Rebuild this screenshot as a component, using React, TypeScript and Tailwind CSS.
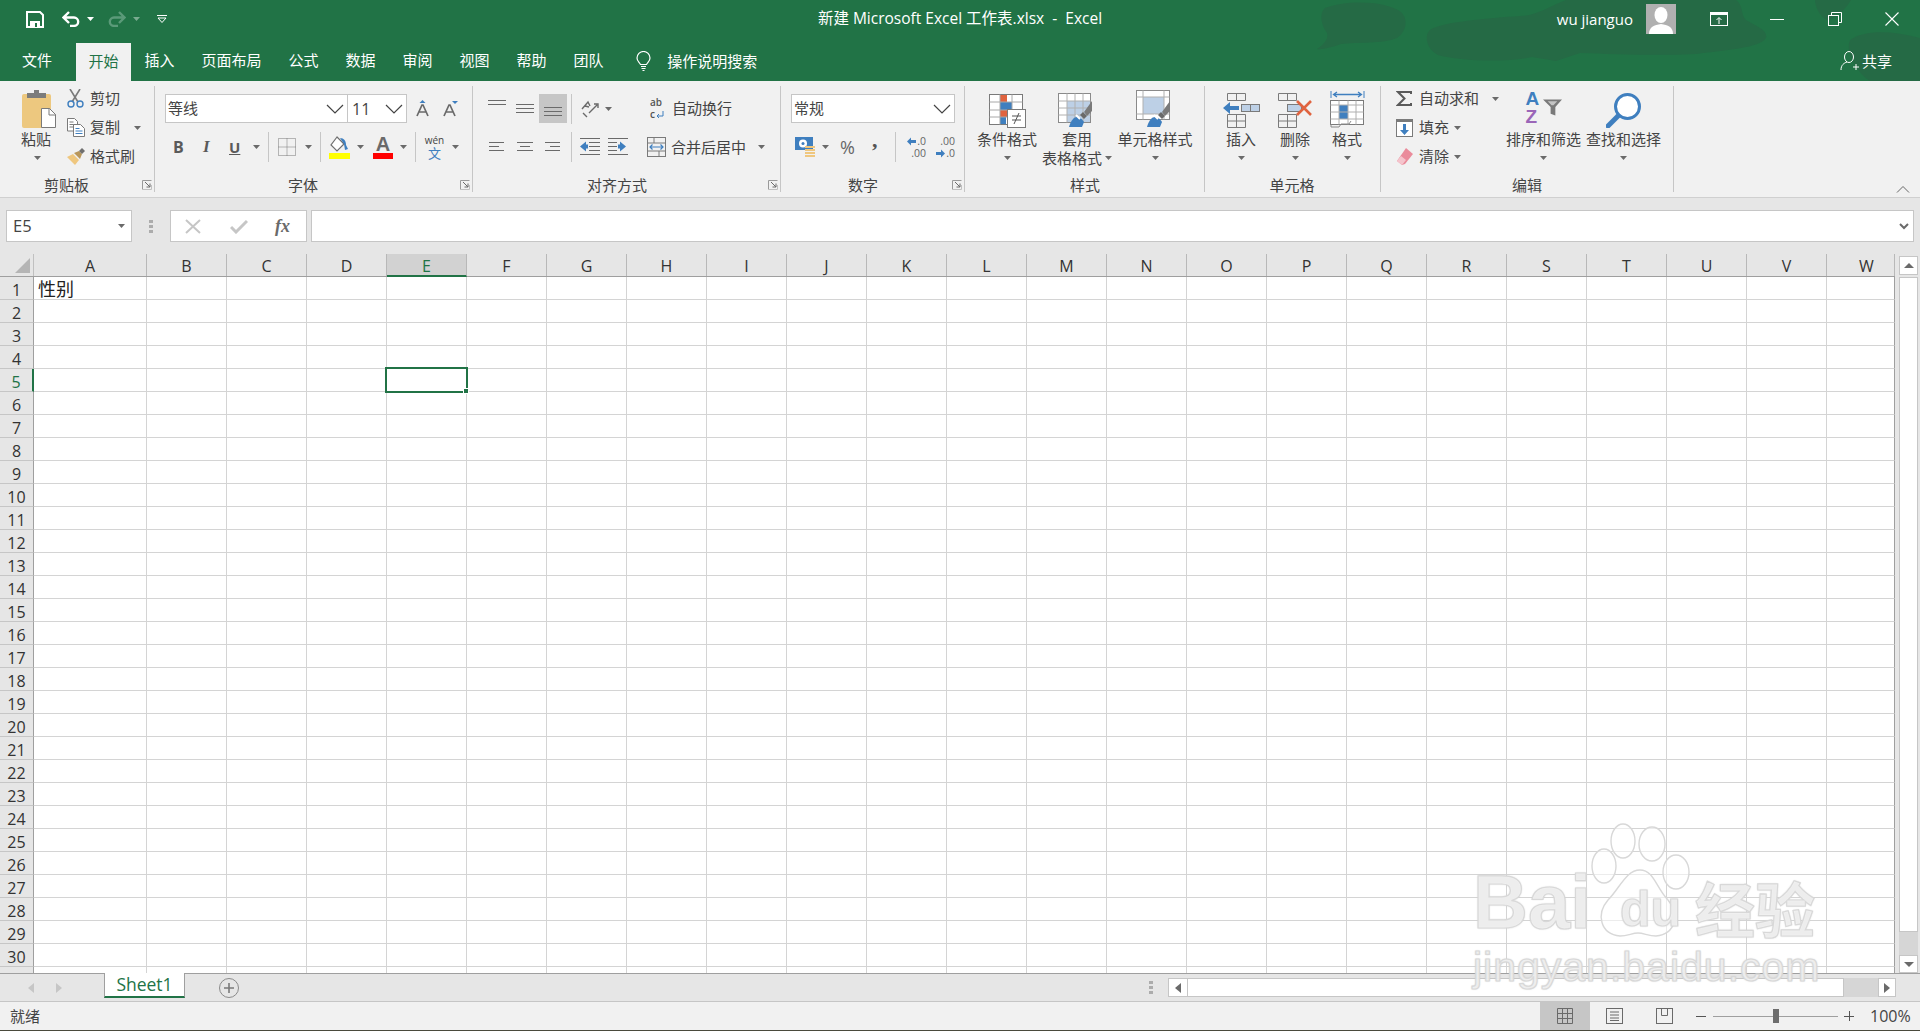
import React from "react";

const COLS = ["A","B","C","D","E","F","G","H","I","J","K","L","M","N","O","P","Q","R","S","T","U","V","W"];
const ROWS = Array.from({ length: 31 }, (_, i) => i + 1);

function colW(c: string) {
  if (c === "A") return "w-[113px]";
  if (c === "W") return "w-[68px]";
  return "w-[80px]";
}

const Caret = ({ className = "" }: { className?: string }) => (
  <svg width="7" height="4" viewBox="0 0 7 4" className={"shrink-0 " + className}><path d="M0 0h7L3.5 4z" fill="#6a6a6a" /></svg>
);
const Chevron = () => (
  <svg width="18" height="10" viewBox="0 0 18 10" className="shrink-0"><path d="M1 1l8 8 8-8" fill="none" stroke="#444" strokeWidth="1.2" /></svg>
);
const Sep = ({ className = "" }: { className?: string }) => <div className={"w-px h-[30px] bg-[#c6c6c6] shrink-0 " + className} />;

const Launcher = () => (
  <svg width="11" height="10" viewBox="0 0 11 10" className="shrink-0"><path d="M.5 9.5V.5h9" fill="none" stroke="#9a9a9a" /><path d="M.5 9.5h9V5" fill="none" stroke="#c0c0c0" /><path d="M3 2l5 5M8 3.5V7H4.5" fill="none" stroke="#6a6a6a" /></svg>
);

const Lines = ({ rows, w = 18 }: { rows: [number, number][]; w?: number }) => (
  <svg width={w} height="12" viewBox={`0 0 ${w} 12`} className="shrink-0">
    {rows.map(([x1, x2], i) => <rect key={i} x={x1} y={1 + i * 4} width={x2 - x1} height="1" fill="#6a6a6a" />)}
  </svg>
);

function Group({ w, labelW, label, launcher, children }: { w: string; labelW: string; label: string; launcher?: boolean; children: React.ReactNode }) {
  return (
    <div className={"h-[106px] mt-[5px] border-r border-[#c6c6c6] flex flex-col shrink-0 " + w}>
      <div className="h-[91px] flex flex-col">{children}</div>
      <div className="h-[15px] flex items-center">
        <div className={"text-center leading-[15px] shrink-0 " + labelW}>{label}</div>
        {launcher && <div className="ml-auto mr-[1px] mt-[1px]"><Launcher /></div>}
      </div>
    </div>
  );
}

const SmallRow = ({ icon, text, caretClass }: { icon: React.ReactNode; text: string; caretClass?: string }) => (
  <div className="h-[29px] flex items-center">
    <div className="w-[23px] shrink-0 flex items-center">{icon}</div>
    <span className="whitespace-nowrap">{text}</span>
    {caretClass && <Caret className={caretClass} />}
  </div>
);

const Big = ({ icon, l1, l2, className }: { icon: React.ReactNode; l1: string; l2?: React.ReactNode; className: string }) => (
  <div className={"flex flex-col items-center shrink-0 pt-[4px] " + className}>
    <div className="h-[38px] flex items-end justify-center">{icon}</div>
    <div className="h-[18px] mt-[2px] leading-[18px] whitespace-nowrap">{l1}</div>
    {l2 ? <div className="h-[18px] mt-[1px] leading-[18px] whitespace-nowrap flex items-center">{l2}</div> : <div className="h-[18px] mt-[1px] flex items-center"><Caret /></div>}
  </div>
);

/* ---------- Icons ---------- */
const SaveIcon = () => (
  <svg width="18" height="17" viewBox="0 0 18 17"><path d="M1 1h13l3 3v12H1z" fill="none" stroke="#fff" strokeWidth="2" /><rect x="4" y="10" width="10" height="6" fill="#fff" /><rect x="9" y="12" width="2" height="4" fill="#217346" /></svg>
);
const UndoIcon = ({ c = "#fff" }: { c?: string }) => (
  <svg width="19" height="16" viewBox="0 0 19 16"><path d="M1.5 6.5H12a4.2 4.2 0 0 1 0 8.4H8M7 1L1.5 6.5 7 12" fill="none" stroke={c} strokeWidth="2.4" /></svg>
);
const RedoIcon = ({ c = "#5b9a79" }: { c?: string }) => (
  <svg width="19" height="16" viewBox="0 0 19 16"><path d="M17.5 6.5H7a4.2 4.2 0 0 0 0 8.4h4M12 1l5.5 5.5L12 12" fill="none" stroke={c} strokeWidth="2.4" /></svg>
);
const Custom = () => (
  <svg width="10" height="8" viewBox="0 0 10 8"><path d="M0 .5h10" stroke="#fff" /><path d="M1 3h8L5 7.5z" fill="none" stroke="#fff" /></svg>
);
const PasteIcon = () => (
  <svg width="34" height="38" viewBox="0 0 34 38">
    <rect x="0" y="4" width="29" height="34" rx="2" fill="#edc87f" />
    <path d="M5 3h7V0h5v3h7v5H5z" fill="#7c7c7c" />
    <path d="M19.5 18.5h8l6 6v13h-14z" fill="#fff" stroke="#7a7a7a" />
    <path d="M27 18v7h7" fill="none" stroke="#7a7a7a" />
  </svg>
);
const Scissors = () => (
  <svg width="17" height="19" viewBox="0 0 17 19"><path d="M3 0l8 13M13 0L5 13" stroke="#7a7a7a" strokeWidth="1.6" /><circle cx="4" cy="15" r="3" fill="none" stroke="#3f7fbf" strokeWidth="1.4" /><circle cx="13" cy="15" r="3" fill="none" stroke="#3f7fbf" strokeWidth="1.4" /></svg>
);
const CopyIcon = () => (
  <svg width="18" height="19" viewBox="0 0 18 19">
    <path d="M.5.5h7l3 3V13H.5z" fill="#fff" stroke="#7a7a7a" />
    <path d="M2.5 4h4M2.5 6.5h5M2.5 9h5" stroke="#7a7a7a" />
    <path d="M6.5 6.5h7l4 4v8h-11z" fill="#fff" stroke="#7a7a7a" />
    <path d="M8.5 10.5h4M8.5 13h7M8.5 15.500h7" stroke="#3f7fbf" />
  </svg>
);
const BrushIcon = () => (
  <svg width="18" height="18" viewBox="0 0 18 18"><path d="M0 9l6-3 6 6-4 5z" fill="#efc77f" /><path d="M7 5l5-2 3 3-2 5z" fill="#b9975b" /><path d="M12 3l3-3 3 3-3 3z" fill="#6f6f6f" /></svg>
);
const BordersIcon = () => (
  <svg width="18" height="18" viewBox="0 0 18 18"><path d="M.5.5h17v17H.5zM9 .5v17M.5 9h17" fill="none" stroke="#777" strokeDasharray="1 1" /></svg>
);
const FillIcon = () => (
  <svg width="21" height="23" viewBox="0 0 21 23">
    <path d="M8 1L2 9l6 6 7-7z" fill="#fff" stroke="#6f6f6f" strokeWidth="1.2" />
    <path d="M11 2c4 0 6 3 6 7l2 4-3 1-1-6" fill="#3f7fbf" />
    <rect y="17" width="21" height="6" fill="#ffff00" />
  </svg>
);
const FontColorIcon = () => (
  <div className="w-[20px] flex flex-col items-center">
    <span className="font-['Liberation_Sans',sans-serif] font-bold text-[#6a6a6a] text-[20px] leading-[17px]">A</span>
    <div className="w-[20px] h-[6px] bg-[#ff0000]" />
  </div>
);
const CondIcon = () => (
  <svg width="37" height="34" viewBox="0 0 37 34">
    <rect x=".5" y=".5" width="33" height="30" fill="#fff" stroke="#7a7a7a" />
    <rect x="11" y="1" width="7" height="7" fill="#e0633f" /><rect x="11" y="8" width="12" height="8" fill="#3f7fbf" /><rect x="11" y="16" width="9" height="7" fill="#e0633f" /><rect x="11" y="23" width="6" height="7" fill="#3f7fbf" />
    <path d="M11 .5v30M23 .5v18M.5 8h33M.5 16h33M.5 23h33" stroke="#a8a8a8" fill="none" />
    <rect x="18.500" y="15.500" width="18" height="18" fill="#fff" stroke="#7a7a7a" />
    <path d="M23 22h9M23 26h9M30 19l-5 11" stroke="#555" fill="none" />
  </svg>
);
const Wand = ({ x = 0, y = 0 }: { x?: number; y?: number }) => (
  <g transform={`translate(${x} ${y})`}>
    <path d="M0 26c2-7 5-10 8-10 3 0 6 3 7 5l-2 5z" fill="#3f7fbf" />
    <path d="M7 14l4 4" stroke="#fff" strokeWidth="2" />
    <path d="M11 14l3-3 4 4-3 3z" fill="#6a6a6a" />
    <path d="M15 11l8-11v10l-5 5z" fill="#7a7a7a" />
  </g>
);
const TableIcon = () => (
  <svg width="38" height="35" viewBox="0 0 38 35">
    <rect x=".5" y=".5" width="32" height="29" fill="#fff" stroke="#8a8a8a" />
    <rect x="9" y="8" width="23" height="21" fill="#bdd0e6" />
    <path d="M9 .5v29M17 .5v29M25 .5v29M.5 8h32M.5 15h32M.5 22h32" stroke="#b0b0b0" fill="none" />
    <Wand x={11} y={8} />
  </svg>
);
const CellStyleIcon = () => (
  <svg width="39" height="38" viewBox="0 0 39 38">
    <rect x=".5" y=".5" width="33" height="29" fill="#fff" stroke="#8a8a8a" />
    <rect x="7" y="7" width="21" height="17" fill="#bdd0e6" />
    <path d="M7 .5v29M28 .5v29M.5 7h33M.5 24h33" stroke="#b0b0b0" fill="none" />
    <Wand x={11} y={11} />
  </svg>
);
const InsertIcon = () => (
  <svg width="37" height="35" viewBox="0 0 37 35">
    <path d="M4.500.5h18v7h-18zM13.500.5v7M4.500 21.500h18v13h-18zM13.500 21.500v13M4.500 28h18" fill="none" stroke="#7a7a7a" />
    <path d="M0 15l7-6v4h9v4H7v4z" fill="#3f7fbf" />
    <rect x="18.500" y="11.500" width="18" height="7" fill="#bdd0e6" stroke="#7a7a7a" />
    <path d="M27.500 11.500v7" stroke="#7a7a7a" />
  </svg>
);
const DeleteIcon = () => (
  <svg width="35" height="35" viewBox="0 0 35 35">
    <path d="M.5.5h18v7H.5zM9.500.5v7M.5 21.500h18v13H.5zM9.500 21.500v13M.5 28h18" fill="none" stroke="#7a7a7a" />
    <rect x="9.500" y="11.500" width="14" height="7" fill="#bdd0e6" stroke="#7a7a7a" />
    <path d="M19 8l14 14M33 8L19 22" stroke="#e0633f" strokeWidth="2.6" />
  </svg>
);
const FormatIcon = () => (
  <svg width="35" height="38" viewBox="0 0 35 38">
    <path d="M1 1v7M34 1v7" stroke="#3f7fbf" />
    <path d="M4 4.500h27M7 2L3.500 4.500 7 7M28 2l3.500 2.500L28 7" fill="none" stroke="#3f7fbf" strokeWidth="1.3" />
    <rect x=".5" y="10.500" width="33" height="24" fill="#fff" stroke="#7a7a7a" />
    <rect x="9" y="15" width="9" height="14" fill="#3f7fbf" />
    <path d="M9 10.500v24M18 10.500v24M26 10.500v24M.5 15h33M.5 22h33M.5 29h33" stroke="#b0b0b0" fill="none" />
    <path d="M1 34v3h8l2-3h8l2-3" fill="none" stroke="#8a8a8a" />
  </svg>
);
const FillDown = () => (
  <svg width="17" height="18" viewBox="0 0 17 18"><rect x=".5" y=".5" width="16" height="17" fill="#fff" stroke="#7a7a7a" /><rect width="17" height="3" fill="#7a7a7a" /><path d="M7 5h3v6h3l-4.500 5L4 11h3z" fill="#3f7fbf" /></svg>
);
const Eraser = () => (
  <svg width="17" height="17" viewBox="0 0 17 17"><path d="M10 0l7 6-8 10-3 1-5-4z" fill="#ea8b9b" /><path d="M1 13l4-5 5 4-4 5z" fill="#f5c4cc" /></svg>
);
const Sigma = () => (
  <svg width="16" height="15" viewBox="0 0 16 15"><path d="M15 3V1H2l6.500 6.500L2 14h13v-2" fill="none" stroke="#5a5a5a" strokeWidth="2" /></svg>
);
const SortIcon = () => (
  <div className="h-[38px] w-[36px] flex items-start">
    <div className="w-[17px] flex flex-col items-start">
      <span className="font-['Liberation_Sans',sans-serif] font-bold text-[19px] leading-[17px] h-[17px] text-[#3f7fbf]">A</span>
      <span className="font-['Liberation_Sans',sans-serif] font-bold text-[19px] leading-[17px] h-[17px] mt-[1px] text-[#9b66b8]">Z</span>
    </div>
    <svg width="19" height="18" viewBox="0 0 20 18" className="mt-[9px]">
      <path d="M0 0h20l-7 8v9l-5-2V8z" fill="#7a7a7a" /><path d="M5 2h10l-4 4H9z" fill="#c4c4c4" />
    </svg>
  </div>
);
const FindIcon = () => (
  <svg width="36" height="35" viewBox="0 0 36 35"><circle cx="21.500" cy="13.500" r="12" fill="#fff" stroke="#3f7fbf" strokeWidth="3" /><path d="M12 23L2 33" stroke="#3f7fbf" strokeWidth="5" strokeLinecap="round" /></svg>
);
const ArrowL = () => (
  <svg width="9" height="9" viewBox="0 0 9 9" className="inline-block shrink-0"><path d="M0 4.500L4 .5v2.500h5v3H4v2.500z" fill="#3f7fbf" /></svg>
);
const ArrowR = () => (
  <svg width="9" height="9" viewBox="0 0 9 9" className="inline-block shrink-0"><path d="M9 4.500L5 .5v2.500H0v3h5v2.500z" fill="#3f7fbf" /></svg>
);

/* ---------- Title bar ---------- */
function Blobs() {
  return (
    <svg width="1920" height="81" viewBox="0 0 1920 81" className="absolute left-0 top-0">
      <g fill="#256a45">
        <path d="M1325 8c20-8 60-8 76 4 8 8 5 20-4 26-14 6-40 4-56 6-8 3-20 6-24 5 6-4 12-10 10-16-6-8-8-20-2-25z" />
        <path d="M1430 30c10-8 60-12 90-14 16 0 30-10 46-16h170c8 6 4 14 10 20 10 6 22 10 20 18-6 10-40 12-70 16-40 2-84 0-116-1l-24 8-24-4c-26 6-74 4-94-2-12-6-14-20-8-25z" />
        <path d="M1815 0h36c-6 10-16 20-24 20-8-4-12-14-12-20z" />
        <path d="M1850 40c14-10 40-10 70-2v43h-50c-10-6-26-26-20-41z" />
      </g>
    </svg>
  );
}

function TitleBar() {
  return (
    <div className="relative h-[43px] text-white shrink-0 pb-[5px]">
      <div className="h-full grid grid-cols-[1fr_auto_1fr] items-center">
        <div className="flex items-center">
          <div className="ml-[26px]"><SaveIcon /></div>
          <div className="ml-[18px]"><UndoIcon /></div>
          <Caret className="ml-[6px] [&>path]:fill-white" />
          <div className="ml-[13px]"><RedoIcon /></div>
          <Caret className="ml-[7px] opacity-40 [&>path]:fill-white" />
          <div className="ml-[17px]"><Custom /></div>
        </div>
        <div className="font-['Open_Sans','Noto_Sans_CJK_SC',sans-serif] text-[15.500px] whitespace-pre">新建 Microsoft Excel 工作表.xlsx  -  Excel</div>
        <div className="flex items-center justify-end pr-[21px]">
          <span className="font-['Open_Sans',sans-serif] text-[15px] mr-[13px]">wu jianguo</span>
          <div className="w-[30px] h-[30px] bg-[#b0b0b0] flex items-end justify-center overflow-hidden">
            <svg width="28" height="28" viewBox="0 0 28 28"><ellipse cx="14" cy="9" rx="6.500" ry="8" fill="#fff" /><path d="M2 28c0-7 5-9 12-10 7 1 12 3 12 10z" fill="#fff" /></svg>
          </div>
          <svg width="18" height="14" viewBox="0 0 18 14" className="ml-[34px]"><rect x=".5" y=".5" width="17" height="13" fill="none" stroke="#fff" /><rect x="1" y="1" width="16" height="2" fill="#fff" /><path d="M9 12V6M6.500 8L9 5.500 11.500 8" fill="none" stroke="#fff" /></svg>
          <div className="ml-[42px] w-[14px] h-px bg-white" />
          <svg width="14" height="14" viewBox="0 0 14 14" className="ml-[44px]"><path d="M3.500 3V.5h10v10H11" fill="none" stroke="#fff" /><rect x=".5" y="3.500" width="10" height="10" fill="none" stroke="#fff" /></svg>
          <svg width="14" height="14" viewBox="0 0 14 14" className="ml-[43px]"><path d="M.5.500l13 13M13.500.5l-13 13" stroke="#fff" strokeWidth="1.1" /></svg>
        </div>
      </div>
    </div>
  );
}

function TabsRow() {
  const tabs = ["插入", "页面布局", "公式", "数据", "审阅", "视图", "帮助", "团队"];
  return (
    <div className="relative h-[38px] text-white flex items-center shrink-0">
      <div className="w-[76px] pl-[22px] pb-[3px]">文件</div>
      <div className="w-[55px] h-[38px] bg-[#f1f1f1] text-[#217346] text-center leading-[36px]">开始</div>
      {tabs.map((t) => (
        <div key={t} className="px-[13.500px] pb-[3px] whitespace-nowrap">{t}</div>
      ))}
      <svg width="15" height="20" viewBox="0 0 15 20" className="ml-[19px] mb-[2px]"><path d="M4.500 13.500C3 11 1 10 1 7a6.500 6.500 0 0 1 13 0c0 3-2 4-3.500 6.500z" fill="none" stroke="#fff" strokeWidth="1.2" /><path d="M5 15.500h5M5.500 17.500h4M6.500 19.500h2" stroke="#fff" /></svg>
      <div className="ml-[16px] pb-[2px]">操作说明搜索</div>
      <div className="ml-auto pr-[28px] flex items-center pb-[2px]">
        <svg width="20" height="20" viewBox="0 0 20 20"><ellipse cx="9" cy="6" rx="4.500" ry="5.500" fill="none" stroke="#fff" /><path d="M1 19c0-5 3-7 6-8M13 16h6M16 13v6" fill="none" stroke="#fff" /></svg>
        <span className="ml-[2px]">共享</span>
      </div>
    </div>
  );
}

/* ---------- Ribbon ---------- */
const Clipboard = () => (
  <Group w="w-[155px]" labelW="w-[133px]" label="剪贴板" launcher>
    <div className="flex">
      <div className="ml-[18px] w-[36px] flex flex-col items-center pt-[4px]">
        <div className="ml-[6px]"><PasteIcon /></div>
        <div className="mt-[2px] h-[18px] leading-[18px] whitespace-nowrap">粘贴</div>
        <div className="h-[18px] mt-[1px] flex items-center ml-[3px]"><Caret /></div>
      </div>
      <div className="ml-[13px] flex flex-col -mt-[2px]">
        <SmallRow icon={<Scissors />} text="剪切" />
        <SmallRow icon={<CopyIcon />} text="复制" caretClass="ml-[14px]" />
        <SmallRow icon={<BrushIcon />} text="格式刷" />
      </div>
    </div>
  </Group>
);

const FontGroup = () => (
  <Group w="w-[318px]" labelW="w-[296px]" label="字体" launcher>
    <div className="flex items-center mt-[8px] h-[29px]">
      <div className="ml-[10px] w-[183px] h-[29px] bg-white border border-[#c6c6c6] flex items-center pl-[2px] pr-[3px] justify-between">
        <span>等线</span><Chevron />
      </div>
      <div className="w-[60px] -ml-px h-[29px] bg-white border border-[#c6c6c6] flex items-center pl-[4px] pr-[3px] justify-between">
        <span className="font-['Open_Sans',sans-serif] text-[16px]">11</span><Chevron />
      </div>
      <svg width="16" height="17" viewBox="0 0 16 17" className="ml-[8px]"><path d="M2 16L7 5h1l5 11M4 12h7" fill="none" stroke="#6a6a6a" strokeWidth="1.7" /><path d="M7.500 0l3 3h-6z" fill="#3f7fbf" /></svg>
      <svg width="16" height="17" viewBox="0 0 16 17" className="ml-[12px]"><path d="M1 16L6 5h1l5 11M3 12h7" fill="none" stroke="#6a6a6a" strokeWidth="1.7" /><path d="M9 1h6l-3 3z" fill="#3f7fbf" /></svg>
    </div>
    <div className="flex items-center mt-[9px] h-[30px] text-[#5a5a5a]">
      <span className="ml-[18px] w-[10px] font-['Open_Sans',sans-serif] font-bold text-[16px]">B</span>
      <span className="ml-[20px] w-[9px] font-['Liberation_Serif',serif] italic font-bold text-[17px]">I</span>
      <span className="ml-[17px] w-[11px] font-['Open_Sans',sans-serif] font-bold text-[15px] underline">U</span>
      <Caret className="ml-[13px]" />
      <Sep className="ml-[8px]" />
      <div className="ml-[9px]"><BordersIcon /></div>
      <Caret className="ml-[9px]" />
      <Sep className="ml-[8px]" />
      <div className="ml-[8px]"><FillIcon /></div>
      <Caret className="ml-[7px]" />
      <div className="ml-[9px]"><FontColorIcon /></div>
      <Caret className="ml-[7px]" />
      <Sep className="ml-[8px]" />
      <div className="ml-[9px] w-[19px] flex flex-col items-center">
        <span className="font-['Open_Sans',sans-serif] text-[10px] leading-[11px] text-[#444]">wén</span>
        <span className="text-[13px] leading-[14px] text-[#3f7fbf]">文</span>
      </div>
      <Caret className="ml-[8px]" />
    </div>
  </Group>
);

const AlignGroup = () => (
  <Group w="w-[308px]" labelW="w-[288px]" label="对齐方式" launcher>
    <div className="flex items-center mt-[8px] h-[29px]">
      <div className="ml-[15px] mb-[8px]"><Lines rows={[[0, 18], [0, 18]]} /></div>
      <div className="ml-[10px]"><Lines rows={[[0, 18], [0, 18], [0, 18]]} /></div>
      <div className="ml-[5px] w-[28px] h-[29px] bg-[#c6c6c6] flex items-center justify-center pt-[6px]"><Lines rows={[[0, 18], [0, 18], [0, 18]]} /></div>
      <Sep className="ml-[4px]" />
      <svg width="20" height="20" viewBox="0 0 20 20" className="ml-[8px]"><path d="M2 10l6-7 2 4M5 7l4 1M9 14l8-8M14 5h4v4M3 14l4 4" fill="none" stroke="#6a6a6a" strokeWidth="1.4" /></svg>
      <Caret className="ml-[5px]" />
      <div className="ml-[38px] w-[16px] flex flex-col items-start">
        <span className="font-['Open_Sans',sans-serif] text-[#555] text-[10px] leading-[9px] font-semibold h-[9px]">ab</span>
        <div className="h-[9px] flex items-center mt-[3px]">
          <span className="font-['Open_Sans',sans-serif] text-[#555] text-[10px] leading-[9px] font-semibold">c</span>
          <svg width="8" height="8" viewBox="0 0 8 8" className="ml-[1px]"><path d="M7 0v5H1M3 3L1 5l2 2" fill="none" stroke="#3f7fbf" /></svg>
        </div>
      </div>
      <span className="ml-[6px] whitespace-nowrap">自动换行</span>
    </div>
    <div className="flex items-center mt-[9px] h-[30px]">
      <div className="ml-[16px]"><Lines w={15} rows={[[0, 15], [0, 10], [0, 15]]} /></div>
      <div className="ml-[12px]"><Lines rows={[[1, 17], [4, 14], [1, 17]]} /></div>
      <div className="ml-[11px]"><Lines w={15} rows={[[0, 15], [5, 15], [0, 15]]} /></div>
      <Sep className="ml-[11px]" />
      <svg width="20" height="18" viewBox="0 0 20 18" className="ml-[8px]"><path d="M0 .5h20M9 4.500h11M9 8.500h11M9 12.500h11M0 16.500h20" stroke="#6a6a6a" /><path d="M0 8.500l6-5v3h2v4H6v3z" fill="#3f7fbf" /></svg>
      <svg width="20" height="18" viewBox="0 0 20 18" className="ml-[8px]"><path d="M0 .5h20M0 4.500h9M0 8.500h9M0 12.500h9M0 16.500h20" stroke="#6a6a6a" /><path d="M18 8.500l-6-5v3h-2v4h2v3z" fill="#3f7fbf" /></svg>
      <svg width="19" height="20" viewBox="0 0 19 20" className="ml-[19px]"><rect x=".5" y=".5" width="18" height="19" fill="none" stroke="#7a7a7a" /><path d="M.5 6h18M.5 14h18M7 .5V6M12 14v5.500" stroke="#7a7a7a" /><path d="M3 10h13M5.500 7.500L3 10l2.500 2.500M13.500 7.500L16 10l-2.500 2.500" fill="none" stroke="#3f7fbf" strokeWidth="1.2" /></svg>
      <span className="ml-[5px] whitespace-nowrap">合并后居中</span>
      <Caret className="ml-[12px]" />
    </div>
  </Group>
);

const NumberGroup = () => (
  <Group w="w-[184px]" labelW="w-[164px]" label="数字" launcher>
    <div className="flex items-center mt-[8px] h-[29px]">
      <div className="ml-[10px] w-[164px] h-[29px] bg-white border border-[#c6c6c6] flex items-center pl-[2px] pr-[3px] justify-between">
        <span>常规</span><Chevron />
      </div>
    </div>
    <div className="flex items-center mt-[9px] h-[30px]">
      <svg width="20" height="21" viewBox="0 0 20 21" className="ml-[14px]"><rect width="18" height="13" fill="#3f7fbf" /><circle cx="8" cy="6.500" r="4" fill="#fff" /><circle cx="8" cy="6.500" r="1.500" fill="#3f7fbf" /><path d="M10 10h10M10 13h10M10 16h10M10 19h10" stroke="#efc77f" strokeWidth="2" /></svg>
      <Caret className="ml-[7px]" />
      <span className="ml-[11px] w-[18px] font-['Open_Sans',sans-serif] text-[18px] text-[#666]">%</span>
      <span className="ml-[14px] w-[8px] font-['Liberation_Serif',serif] font-bold text-[22px] leading-[14px] text-[#555] -mt-[14px]">,</span>
      <Sep className="ml-[15px]" />
      <div className="ml-[10px] w-[20px] flex flex-col font-['Open_Sans',sans-serif] text-[10.500px] text-[#666]">
        <div className="h-[11px] flex items-center justify-end leading-[11px]"><ArrowL /><span className="ml-[1px]">.0</span></div>
        <div className="h-[11px] mt-[1px] leading-[11px] text-right">.00</div>
      </div>
      <div className="ml-[9px] w-[20px] flex flex-col font-['Open_Sans',sans-serif] text-[10.500px] text-[#666]">
        <div className="h-[11px] leading-[11px] text-right">.00</div>
        <div className="h-[11px] mt-[1px] flex items-center justify-end leading-[11px]"><ArrowR /><span className="ml-[1px]">.0</span></div>
      </div>
    </div>
  </Group>
);

const StylesGroup = () => (
  <Group w="w-[240px]" labelW="w-[240px]" label="样式">
    <div className="flex">
      <Big className="ml-[12px] w-[60px]" icon={<CondIcon />} l1="条件格式" />
      <Big className="ml-[5px] w-[70px]" icon={<TableIcon />} l1="套用" l2={<>表格格式<Caret className="ml-[3px]" /></>} />
      <Big className="ml-[5px] w-[76px]" icon={<CellStyleIcon />} l1="单元格样式" />
    </div>
  </Group>
);

const CellsGroup = () => (
  <Group w="w-[176px]" labelW="w-[174px]" label="单元格">
    <div className="flex">
      <Big className="ml-[21px] w-[30px]" icon={<InsertIcon />} l1="插入" />
      <Big className="ml-[24px] w-[30px]" icon={<DeleteIcon />} l1="删除" />
      <Big className="ml-[22px] w-[30px]" icon={<FormatIcon />} l1="格式" />
    </div>
  </Group>
);

const EditGroup = () => (
  <Group w="w-[293px]" labelW="w-[292px]" label="编辑">
    <div className="flex">
      <div className="ml-[15px] w-[110px] flex flex-col -mt-[2px] shrink-0">
        <SmallRow icon={<Sigma />} text="自动求和" caretClass="ml-[13px]" />
        <SmallRow icon={<FillDown />} text="填充" caretClass="ml-[5px]" />
        <SmallRow icon={<Eraser />} text="清除" caretClass="ml-[5px]" />
      </div>
      <Big className="w-[75px]" icon={<SortIcon />} l1="排序和筛选" />
      <Big className="ml-[5px] w-[75px]" icon={<FindIcon />} l1="查找和选择" />
    </div>
  </Group>
);

function Ribbon() {
  return (
    <div className="relative h-[117px] bg-[#f1f1f1] border-b border-[#d0d0d0] flex text-[#444] shrink-0">
      <Clipboard />
      <FontGroup />
      <AlignGroup />
      <NumberGroup />
      <StylesGroup />
      <CellsGroup />
      <EditGroup />
      <svg width="14" height="8" viewBox="0 0 14 8" className="ml-[222px] mt-[104px]"><path d="M1 7.500l6-6 6 6" fill="none" stroke="#666" /></svg>
    </div>
  );
}

function FormulaBar() {
  return (
    <div className="h-[56px] bg-[#e6e6e6] flex items-center pl-[6px] pr-[6px] shrink-0 text-[#444]">
      <div className="w-[126px] h-[32px] bg-white border border-[#c6c6c6] flex items-center justify-between pl-[6px] pr-[6px]">
        <span className="font-['Open_Sans',sans-serif] text-[16.500px]">E5</span>
        <Caret />
      </div>
      <div className="ml-[17px] w-[4px] flex flex-col gap-[2px]">
        <div className="h-[3px] bg-[#acacac]" /><div className="h-[3px] bg-[#acacac]" /><div className="h-[3px] bg-[#acacac]" />
      </div>
      <div className="ml-[17px] w-[137px] h-[32px] bg-white border border-[#c6c6c6] flex items-center shrink-0">
        <svg width="16" height="15" viewBox="0 0 16 15" className="ml-[14px]"><path d="M1 1l14 13M15 1L1 14" stroke="#c6c6c6" strokeWidth="2" /></svg>
        <svg width="18" height="15" viewBox="0 0 18 15" className="ml-[29px]"><path d="M1 8l5 5L17 2" fill="none" stroke="#c6c6c6" strokeWidth="3" /></svg>
        <span className="ml-[27px] font-['Liberation_Serif',serif] italic font-bold text-[18px] text-[#6a6a6a]">fx</span>
      </div>
      <div className="ml-[4px] flex-1 h-[32px] bg-white border border-[#c6c6c6] flex items-center justify-end pr-[4px]">
        <svg width="10" height="7" viewBox="0 0 10 7"><path d="M1 1l4 4 4-4" fill="none" stroke="#6a6a6a" strokeWidth="2" /></svg>
      </div>
    </div>
  );
}

function Sheet() {
  return (
    <div className="flex h-[719px] shrink-0">
      <div className="relative w-[1895px] overflow-hidden bg-white font-['Open_Sans',sans-serif] text-[16px] text-[#333]">
        <div className="flex h-[23px] bg-[#e6e6e6] border-b border-[#9f9f9f]">
          <div className="w-[34px] h-[22px] border-r border-[#c0c0c0] flex items-end justify-end pr-[3px] pb-[3px] shrink-0">
            <svg width="15" height="15" viewBox="0 0 15 15"><path d="M15 0v15H0z" fill="#b5b5b5" /></svg>
          </div>
          {COLS.map((c) => (
            <div key={c} className={"h-[22px] pt-[2px] border-r border-[#b8b8b8] flex items-center shrink-0 " + colW(c) + (c === "W" ? " justify-start pl-[32px]" : " justify-center") + (c === "E" ? " bg-[#d2d2d2] text-[#217346] border-b-2 border-b-[#217346] h-[23px]" : "")}>{c}</div>
          ))}
        </div>
        {ROWS.map((r) => (
          <div key={r} className="flex h-[23px]">
            <div className={"w-[34px] h-[23px] pt-[3px] bg-[#e6e6e6] border-b border-[#c6c6c6] border-r border-r-[#9f9f9f] flex items-center justify-center shrink-0 " + (r === 5 ? "bg-[#d2d2d2] text-[#217346] border-r-2 border-r-[#217346]" : "")}>{r <= 30 ? r : null}</div>
            {COLS.map((c) => (
              <div key={c} className={"h-[23px] border-b border-r border-[#d4d4d4] shrink-0 flex items-center " + colW(c) + (c === "W" ? " border-r-[#9f9f9f]" : "")}>
                {c === "A" && r === 1 ? <span className="pl-[4px] pt-[1px] font-['Noto_Sans_CJK_SC',sans-serif] text-[18px] text-[#222]">性别</span> : null}
              </div>
            ))}
          </div>
        ))}
        <div className="absolute left-[385px] top-[113px] w-[83px] h-[26px] border-2 border-[#217346]">
          <div className="absolute -right-[3px] -bottom-[3px] w-[6px] h-[6px] bg-[#217346] border border-white" />
        </div>
      </div>
      <div className="w-[25px] bg-[#e6e6e6] flex flex-col items-center pl-[1px] pt-[2px] pb-0 border-l border-[#e6e6e6]">
        <div className="w-[19px] h-[19px] bg-white border border-[#c6c6c6] flex items-center justify-center shrink-0">
          <svg width="10" height="5" viewBox="0 0 10 5"><path d="M5 0l5 5H0z" fill="#6a6a6a" /></svg>
        </div>
        <div className="w-[19px] h-[655px] bg-white border border-[#c6c6c6] mt-[2px] shrink-0" />
        <div className="w-[19px] flex-1 bg-[#d6d6d6]" />
        <div className="w-[19px] h-[18px] bg-white border border-[#c6c6c6] flex items-center justify-center shrink-0">
          <svg width="10" height="5" viewBox="0 0 10 5"><path d="M0 0h10L5 5z" fill="#6a6a6a" /></svg>
        </div>
      </div>
    </div>
  );
}

function TabBar() {
  return (
    <div className="h-[29px] bg-[#e6e6e6] border-t border-[#9f9f9f] border-b border-b-[#c6c6c6] flex items-start shrink-0">
      <svg width="6" height="10" viewBox="0 0 6 10" className="ml-[28px] mt-[9px]"><path d="M6 0v10L0 5z" fill="#c6c6c6" /></svg>
      <svg width="6" height="10" viewBox="0 0 6 10" className="ml-[22px] mt-[9px]"><path d="M0 0v10l6-5z" fill="#c6c6c6" /></svg>
      <div className="ml-[42px] w-[81px] h-[25px] -mt-px bg-white border-x border-[#9f9f9f] border-b-2 border-b-[#217346] text-center font-['Open_Sans',sans-serif] text-[17.500px] leading-[23px] text-[#217346]">Sheet1</div>
      <svg width="20" height="20" viewBox="0 0 20 20" className="ml-[34px] mt-[4px]"><circle cx="10" cy="10" r="9.500" fill="none" stroke="#8a8a8a" /><path d="M10 5v10M5 10h10" stroke="#7a7a7a" strokeWidth="1.600" /></svg>
      <div className="ml-[910px] mt-[7px] w-[4px] flex flex-col gap-[2px]">
        <div className="h-[3px] bg-[#acacac]" /><div className="h-[3px] bg-[#acacac]" /><div className="h-[3px] bg-[#acacac]" />
      </div>
      <div className="ml-[15px] mt-[4px] w-[728px] h-[19px] flex bg-[#d6d6d6]">
        <div className="w-[20px] h-[19px] bg-white border border-[#c6c6c6] flex items-center justify-center"><svg width="6" height="10" viewBox="0 0 6 10"><path d="M6 0v10L0 5z" fill="#6a6a6a" /></svg></div>
        <div className="w-[657px] h-[19px] bg-white border border-[#c6c6c6] -ml-px" />
        <div className="flex-1" />
        <div className="w-[18px] h-[19px] bg-white border border-[#c6c6c6] flex items-center justify-center"><svg width="6" height="10" viewBox="0 0 6 10"><path d="M0 0v10l6-5z" fill="#6a6a6a" /></svg></div>
      </div>
    </div>
  );
}

function StatusBar() {
  return (
    <div className="h-[29px] bg-[#f1f1f1] border-b border-[#4a4a3c] flex items-center text-[#444] shrink-0">
      <span className="ml-[10px]">就绪</span>
      <div className="ml-auto flex items-center h-[28px]">
        <div className="w-[50px] h-[28px] bg-[#c6c6c6] flex items-center justify-center">
          <svg width="16" height="16" viewBox="0 0 16 16"><path d="M.5.5h15v15H.5zM5.500.5v15M10.500.5v15M.5 5.500h15M.5 10.500h15" fill="none" stroke="#6a6a6a" /></svg>
        </div>
        <svg width="17" height="16" viewBox="0 0 17 16" className="ml-[16px]"><rect x=".5" y=".5" width="16" height="15" fill="none" stroke="#6a6a6a" /><path d="M4 4h9M4 7h9M4 10h9M4 12.500h9" stroke="#6a6a6a" /></svg>
        <svg width="17" height="16" viewBox="0 0 17 16" className="ml-[33px]"><rect x=".5" y=".5" width="16" height="15" fill="none" stroke="#6a6a6a" /><path d="M5.500.5v7h6v-7" fill="none" stroke="#6a6a6a" /></svg>
        <div className="ml-[23px] w-[10px] h-px bg-[#555]" />
        <div className="ml-[7px] w-[125px] h-px bg-[#9f9f9f] flex items-center">
          <div className="ml-[60px] w-[6px] h-[14px] bg-[#6d6d6d] shrink-0" />
        </div>
        <div className="ml-[6px] w-[10px] h-[10px] flex items-center justify-center relative">
          <div className="w-[10px] h-px bg-[#555]" /><div className="absolute w-px h-[10px] bg-[#555]" />
        </div>
        <span className="ml-[16px] w-[50px] font-['Open_Sans',sans-serif] text-[16px]">100%</span>
      </div>
    </div>
  );
}

function Watermark() {
  const stroke = "[-webkit-text-stroke:1.2px_#d8d8d8] text-[#ffffffb0] [text-shadow:0_0_2px_#c4c4c4]";
  return (
    <div className="absolute left-[1473px] top-[822px] w-[350px] h-[172px] pointer-events-none font-['Liberation_Sans',sans-serif]">
      <span className={"absolute left-0 top-[40px] text-[76px] leading-[80px] font-bold " + stroke}>Bai</span>
      <svg width="105" height="116" viewBox="0 0 105 116" className="absolute left-[117px] top-0">
        <g fill="#ffffff90" stroke="#d8d8d8" strokeWidth="1.400">
          <ellipse cx="33" cy="19" rx="12" ry="17" />
          <ellipse cx="62" cy="22" rx="13" ry="17" />
          <ellipse cx="14" cy="44" rx="12" ry="17" />
          <ellipse cx="86" cy="50" rx="13" ry="17" />
          <path d="M50 48c14 0 16 18 28 30 12 14 8 34-12 36-8 0-12-3-18-3-6 0-10 3-18 3-20-2-24-22-12-36 12-12 18-30 32-30z" />
        </g>
      </svg>
      <span className={"absolute left-[147px] top-[62px] text-[50px] leading-[50px] font-bold " + stroke}>du</span>
      <span className={"absolute left-[222px] top-[52px] font-['Noto_Sans_CJK_SC',sans-serif] text-[60px] leading-[66px] font-bold whitespace-nowrap " + stroke}>经验</span>
      <span className={"absolute left-[0px] top-[120px] text-[41px] leading-[50px] whitespace-nowrap tracking-[1px] " + stroke}>jingyan.baidu.com</span>
    </div>
  );
}

function Header() {
  return (
    <div className="relative shrink-0 bg-[#217346]">
      <Blobs />
      <TitleBar />
      <TabsRow />
    </div>
  );
}

export default function App() {
  return (
    <div className="relative w-full h-[1031px] overflow-hidden flex flex-col bg-white font-['Noto_Sans_CJK_SC','Noto_Sans',sans-serif] text-[15px]">
      <Header />
      <Ribbon />
      <FormulaBar />
      <Sheet />
      <TabBar />
      <StatusBar />
      <Watermark />
    </div>
  );
}
